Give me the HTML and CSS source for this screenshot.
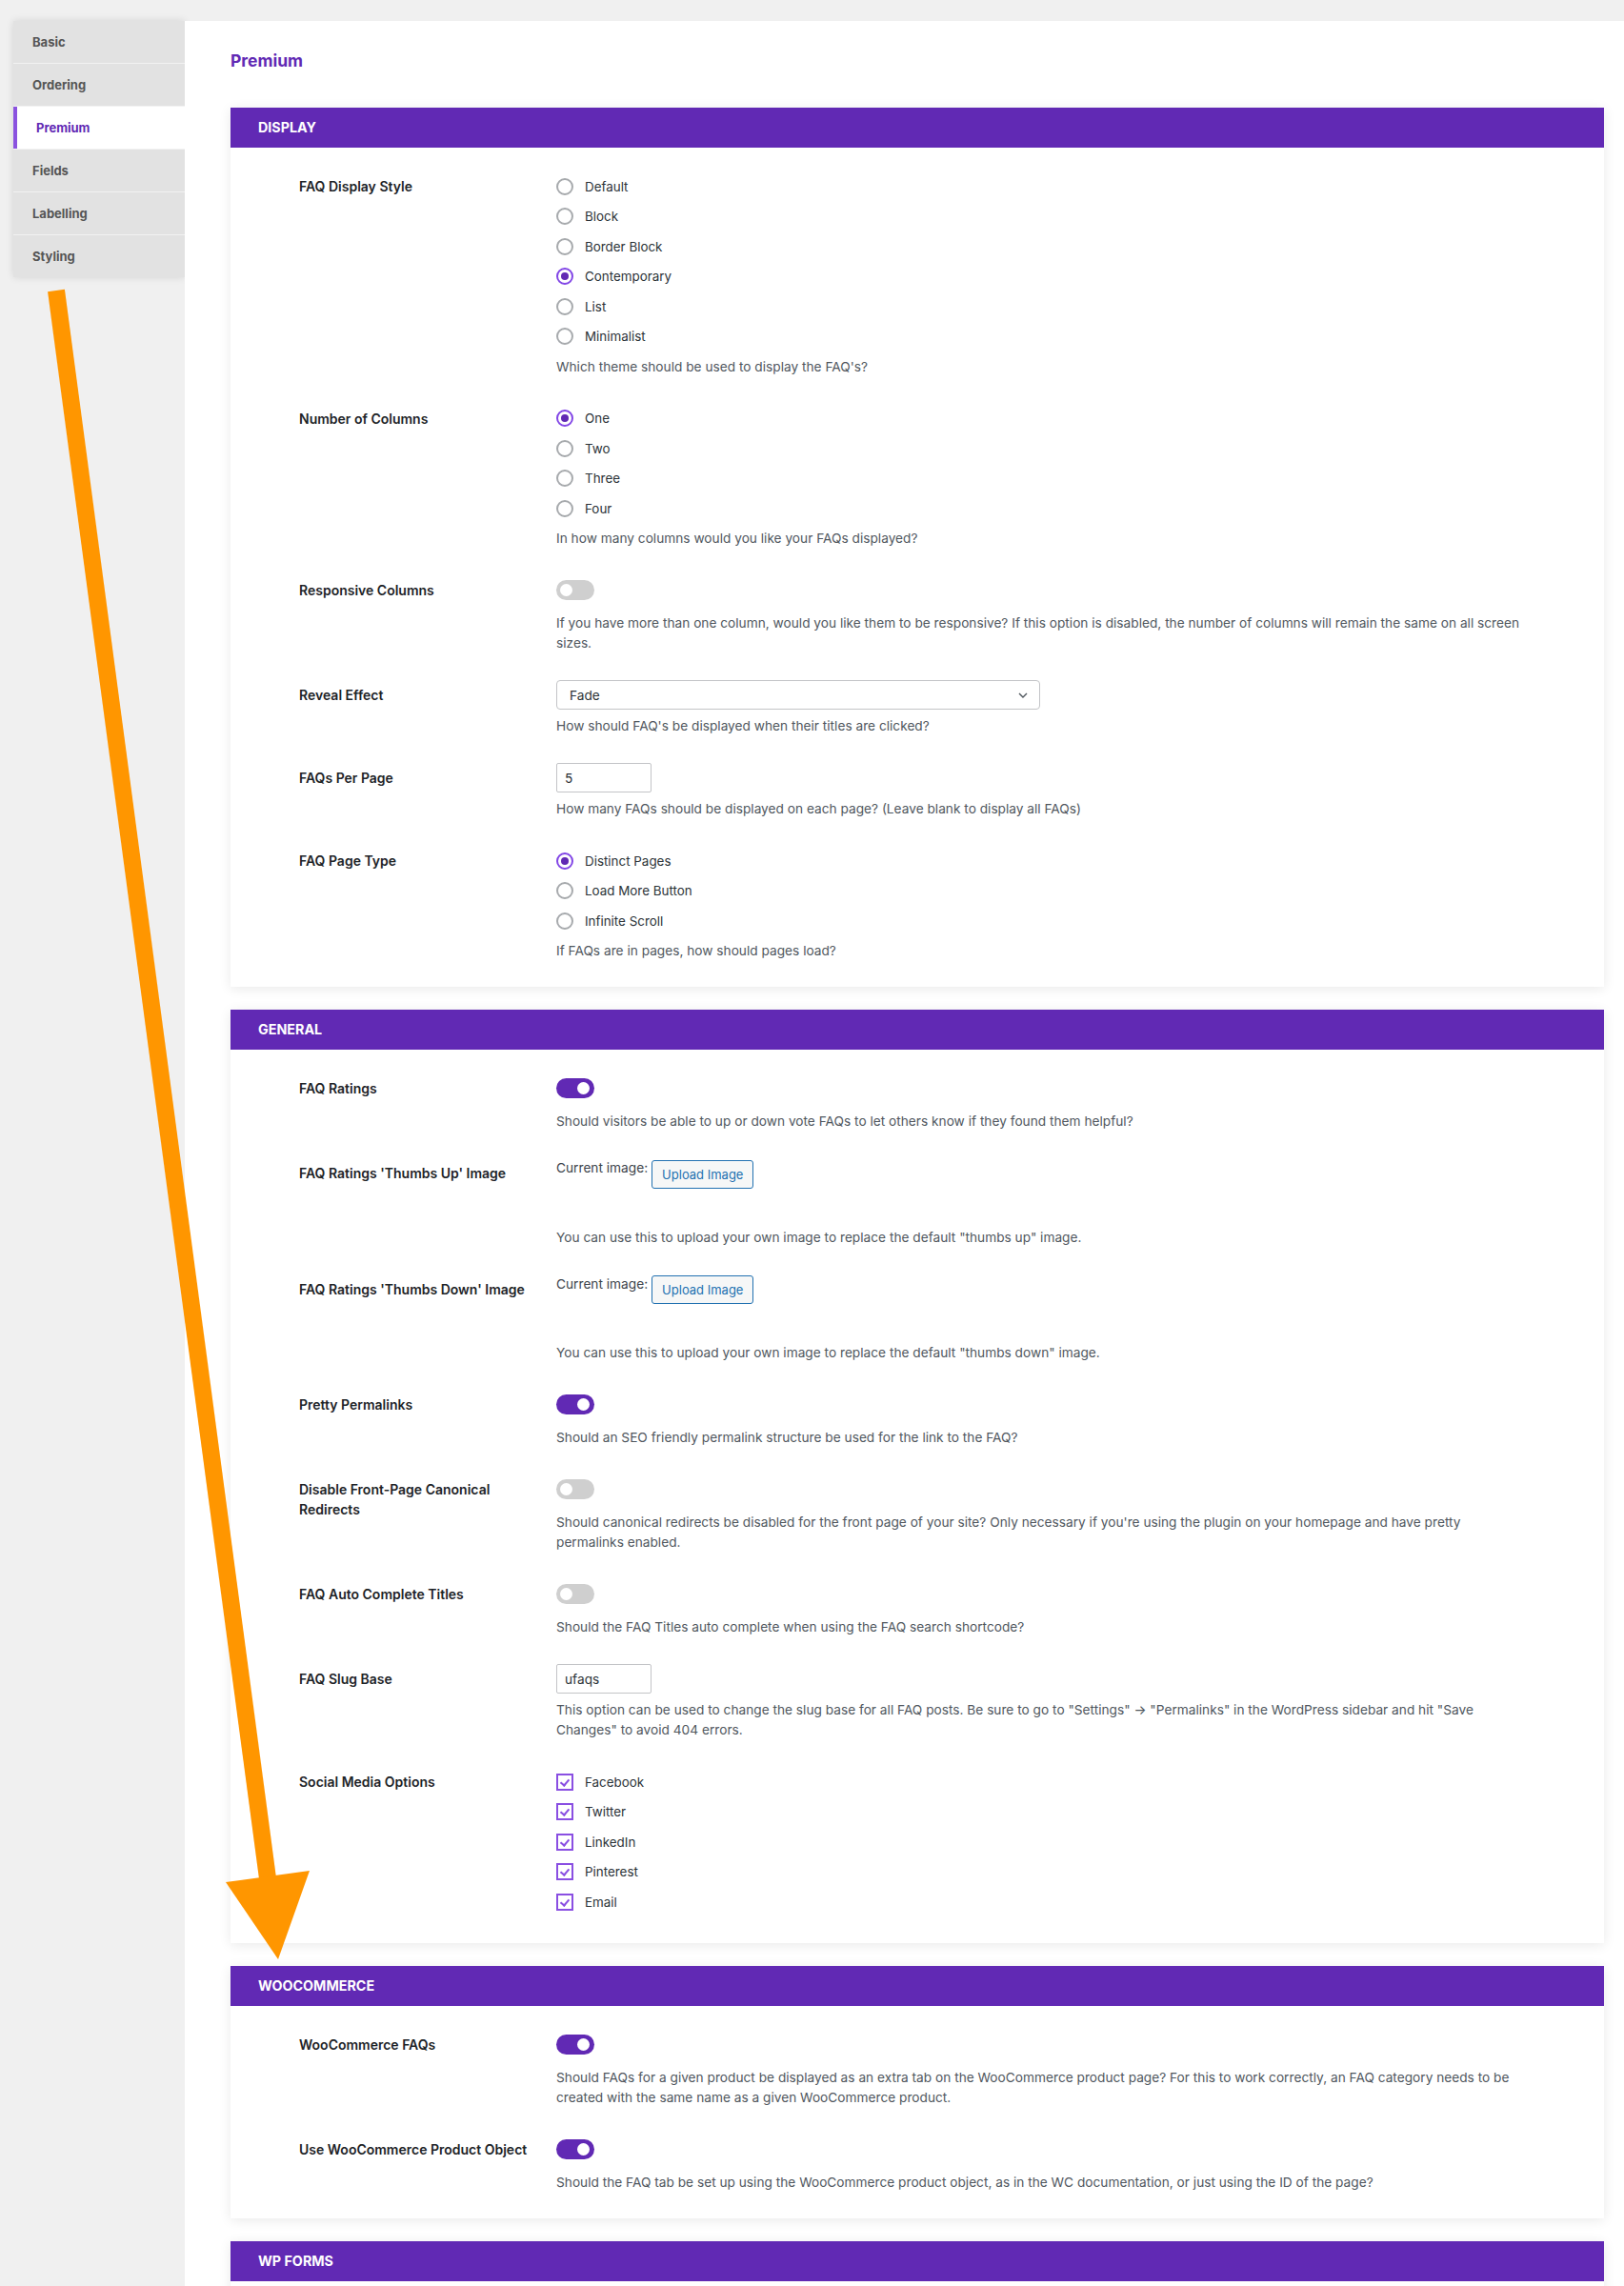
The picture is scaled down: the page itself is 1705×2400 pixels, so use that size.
FILE: index.html
```html
<!DOCTYPE html>
<html lang="en">
<head>
<meta charset="utf-8">
<title>Premium settings</title>
<link rel="stylesheet" href="styles.css">
</head>
<body>
<div class="wrap">
  <nav class="sidebar">
    <div class="tab">Basic</div>
    <div class="tab">Ordering</div>
    <div class="tab active">Premium</div>
    <div class="tab">Fields</div>
    <div class="tab">Labelling</div>
    <div class="tab">Styling</div>
  </nav>
  <main class="main">
    <h1 class="page-title">Premium</h1>

    <section class="section">
      <div class="section-head">DISPLAY</div>
      <div class="section-body">
        <div class="row">
          <div class="label">FAQ Display Style</div>
          <div class="ctrl">
            <div class="opt"><span class="radio"></span>Default</div>
            <div class="opt"><span class="radio"></span>Block</div>
            <div class="opt"><span class="radio"></span>Border Block</div>
            <div class="opt"><span class="radio on"></span>Contemporary</div>
            <div class="opt"><span class="radio"></span>List</div>
            <div class="opt"><span class="radio"></span>Minimalist</div>
            <p class="desc">Which theme should be used to display the FAQ's?</p>
          </div>
        </div>
        <div class="row">
          <div class="label">Number of Columns</div>
          <div class="ctrl">
            <div class="opt"><span class="radio on"></span>One</div>
            <div class="opt"><span class="radio"></span>Two</div>
            <div class="opt"><span class="radio"></span>Three</div>
            <div class="opt"><span class="radio"></span>Four</div>
            <p class="desc">In how many columns would you like your FAQs displayed?</p>
          </div>
        </div>
        <div class="row">
          <div class="label">Responsive Columns</div>
          <div class="ctrl">
            <div class="toggle-wrap"><span class="toggle"></span></div>
            <p class="desc">If you have more than one column, would you like them to be responsive? If this option is disabled, the number of columns will remain the same on all screen sizes.</p>
          </div>
        </div>
        <div class="row">
          <div class="label">Reveal Effect</div>
          <div class="ctrl">
            <div class="select"><span>Fade</span>
              <svg class="chev" width="10" height="6" viewBox="0 0 10 6"><path d="M1 1l4 4 4-4" fill="none" stroke="#50575e" stroke-width="1.4"/></svg>
            </div>
            <p class="desc">How should FAQ's be displayed when their titles are clicked?</p>
          </div>
        </div>
        <div class="row">
          <div class="label">FAQs Per Page</div>
          <div class="ctrl">
            <div class="input">5</div>
            <p class="desc">How many FAQs should be displayed on each page? (Leave blank to display all FAQs)</p>
          </div>
        </div>
        <div class="row">
          <div class="label">FAQ Page Type</div>
          <div class="ctrl">
            <div class="opt"><span class="radio on"></span>Distinct Pages</div>
            <div class="opt"><span class="radio"></span>Load More Button</div>
            <div class="opt"><span class="radio"></span>Infinite Scroll</div>
            <p class="desc">If FAQs are in pages, how should pages load?</p>
          </div>
        </div>
      </div>
    </section>

    <section class="section">
      <div class="section-head">GENERAL</div>
      <div class="section-body">
        <div class="row">
          <div class="label">FAQ Ratings</div>
          <div class="ctrl">
            <div class="toggle-wrap"><span class="toggle on"></span></div>
            <p class="desc">Should visitors be able to up or down vote FAQs to let others know if they found them helpful?</p>
          </div>
        </div>
        <div class="row">
          <div class="label">FAQ Ratings 'Thumbs Up' Image</div>
          <div class="ctrl">
            <div class="upload"><span class="cur">Current image:</span><span class="btn">Upload Image</span></div>
            <p class="desc">You can use this to upload your own image to replace the default "thumbs up" image.</p>
          </div>
        </div>
        <div class="row">
          <div class="label">FAQ Ratings 'Thumbs Down' Image</div>
          <div class="ctrl">
            <div class="upload"><span class="cur">Current image:</span><span class="btn">Upload Image</span></div>
            <p class="desc">You can use this to upload your own image to replace the default "thumbs down" image.</p>
          </div>
        </div>
        <div class="row">
          <div class="label">Pretty Permalinks</div>
          <div class="ctrl">
            <div class="toggle-wrap"><span class="toggle on"></span></div>
            <p class="desc">Should an SEO friendly permalink structure be used for the link to the FAQ?</p>
          </div>
        </div>
        <div class="row">
          <div class="label">Disable Front-Page Canonical Redirects</div>
          <div class="ctrl">
            <div class="toggle-wrap"><span class="toggle"></span></div>
            <p class="desc">Should canonical redirects be disabled for the front page of your site? Only necessary if you're using the plugin on your homepage and have pretty permalinks enabled.</p>
          </div>
        </div>
        <div class="row">
          <div class="label">FAQ Auto Complete Titles</div>
          <div class="ctrl">
            <div class="toggle-wrap"><span class="toggle"></span></div>
            <p class="desc">Should the FAQ Titles auto complete when using the FAQ search shortcode?</p>
          </div>
        </div>
        <div class="row">
          <div class="label">FAQ Slug Base</div>
          <div class="ctrl">
            <div class="input">ufaqs</div>
            <p class="desc">This option can be used to change the slug base for all FAQ posts. Be sure to go to "Settings" -&gt; "Permalinks" in the WordPress sidebar and hit "Save Changes" to avoid 404 errors.</p>
          </div>
        </div>
        <div class="row">
          <div class="label">Social Media Options</div>
          <div class="ctrl">
            <div class="opt"><span class="check"></span>Facebook</div>
            <div class="opt"><span class="check"></span>Twitter</div>
            <div class="opt"><span class="check"></span>LinkedIn</div>
            <div class="opt"><span class="check"></span>Pinterest</div>
            <div class="opt"><span class="check"></span>Email</div>
          </div>
        </div>
      </div>
    </section>

    <section class="section">
      <div class="section-head">WOOCOMMERCE</div>
      <div class="section-body">
        <div class="row">
          <div class="label">WooCommerce FAQs</div>
          <div class="ctrl">
            <div class="toggle-wrap"><span class="toggle on"></span></div>
            <p class="desc">Should FAQs for a given product be displayed as an extra tab on the WooCommerce product page? For this to work correctly, an FAQ category needs to be created with the same name as a given WooCommerce product.</p>
          </div>
        </div>
        <div class="row">
          <div class="label">Use WooCommerce Product Object</div>
          <div class="ctrl">
            <div class="toggle-wrap"><span class="toggle on"></span></div>
            <p class="desc">Should the FAQ tab be set up using the WooCommerce product object, as in the WC documentation, or just using the ID of the page?</p>
          </div>
        </div>
      </div>
    </section>

    <section class="section">
      <div class="section-head">WP FORMS</div>
      <div class="section-body tall"></div>
    </section>
  </main>
</div>

<svg class="arrow" width="1705" height="2400" viewBox="0 0 1705 2400">
  <line x1="59" y1="305" x2="281" y2="1972" stroke="#ff9600" stroke-width="18"/>
  <polygon points="237,1976 325,1964 292,2057" fill="#ff9600"/>
</svg>
</body>
</html>
```

FILE: styles.css
```css
* { box-sizing: border-box; }

html, body {
  margin: 0;
  padding: 0;
}

body {
  background: #f0f0f0;
  font-family: Inter, "Noto Sans", "Liberation Sans", sans-serif;
  font-size: 13.7px;
  color: #1d2327;
  position: relative;
  width: 1705px;
  height: 2400px;
  overflow: hidden;
}

.wrap {
  display: flex;
  align-items: flex-start;
  padding: 22px 0 0 14px;
  min-height: 2400px;
}

/* Sidebar */
.sidebar {
  width: 180px;
  flex: none;
  box-shadow: 0 0 8px rgba(0, 0, 0, 0.12);
  display: flex;
  flex-direction: column;
  gap: 1px;
  background-color: #f2f2f2;
}

.tab {
  height: 44px;
  background: #e2e2e2;
  padding-left: 20px;
  display: flex;
  align-items: center;
  font-weight: 700;
  font-size: 13px;
  color: #555;
}

.tab.active {
  background: #fff;
  border-left: 4px solid #8a52df;
  color: #6129b4;
}

/* Main panel */
.main {
  flex: 1;
  background: #fff;
  align-self: stretch;
  min-height: 2378px;
  padding: 30px 21px 0 48px;
}

.page-title {
  margin: 0 0 37px;
  font-size: 17.5px;
  line-height: 24px;
  font-weight: 700;
  color: #6129b4;
}

.section {
  margin-bottom: 24px;
  box-shadow: 0 2px 12px rgba(0, 0, 0, 0.09);
  background: #fff;
}

.section-head {
  height: 42px;
  line-height: 42px;
  background: #6129b4;
  color: #fff;
  font-weight: 700;
  font-size: 14.3px;
  padding-left: 29px;
}

.section-body {
  padding: 25px 84px 27px 72px;
  display: flex;
  flex-direction: column;
  gap: 28px;
}

.section-body.tall {
  height: 200px;
}

.row {
  display: grid;
  grid-template-columns: 270px 1fr;
  align-items: start;
}

.label {
  padding-top: 5px;
  padding-right: 10px;
  font-weight: 600;
  font-size: 14px;
  line-height: 21px;
  color: #1d2327;
}

.ctrl {
  min-width: 0;
}

.opt {
  height: 31.5px;
  display: flex;
  align-items: center;
  gap: 12px;
  color: #2c3338;
  font-size: 13.4px;
}

.radio {
  width: 18px;
  height: 18px;
  border-radius: 50%;
  border: 2px solid #a7aaad;
  flex: none;
  background: #fff;
  display: flex;
  align-items: center;
  justify-content: center;
}

.radio.on {
  border: 2px solid #8246e6;
}

.radio.on::after {
  content: "";
  width: 8px;
  height: 8px;
  border-radius: 50%;
  background: #6129b4;
}

.check {
  width: 18px;
  height: 18px;
  border: 2px solid #8a4fe2;
  flex: none;
  position: relative;
}

.check::after {
  content: "";
  position: absolute;
  left: 4px;
  top: 2px;
  width: 4px;
  height: 7px;
  border-right: 2px solid #8a4fe2;
  border-bottom: 2px solid #8a4fe2;
  transform: rotate(40deg);
}

.desc {
  margin: 5.5px 0 0;
  font-size: 13.7px;
  line-height: 21px;
  color: #50575e;
}

.toggle-wrap + .desc {
  margin-top: 9px;
}

.select + .desc,
.input + .desc {
  margin-top: 7px;
}

.toggle-wrap {
  height: 31px;
  display: flex;
  align-items: center;
}

.toggle {
  width: 40px;
  height: 21px;
  border-radius: 11px;
  background: #cfcfcf;
  position: relative;
}

.toggle::after {
  content: "";
  position: absolute;
  top: 4px;
  left: 4px;
  width: 13px;
  height: 13px;
  border-radius: 50%;
  background: #fff;
}

.toggle.on {
  background: #6129b4;
}

.toggle.on::after {
  left: auto;
  right: 5px;
}

.select {
  width: 508px;
  height: 31px;
  border: 1px solid #c3c4c7;
  border-radius: 4px;
  display: flex;
  align-items: center;
  justify-content: space-between;
  padding: 0 12px 0 13px;
  color: #2c3338;
  background: #fff;
}

.input {
  width: 100px;
  height: 31px;
  border: 1px solid #c3c4c7;
  border-radius: 2px;
  padding: 0 8px;
  display: flex;
  align-items: center;
  color: #2c3338;
}

.upload {
  height: 67px;
  display: flex;
  align-items: flex-start;
  gap: 4px;
}

.cur {
  line-height: 21px;
  color: #3c434a;
}

.btn {
  margin-top: 1.5px;
  height: 30px;
  padding: 0 10px;
  border: 1px solid #2271b1;
  border-radius: 3px;
  background: #f6f7f7;
  color: #2271b1;
  font-size: 13px;
  display: flex;
  align-items: center;
}

.arrow {
  position: absolute;
  left: 0;
  top: 0;
  pointer-events: none;
}
```
